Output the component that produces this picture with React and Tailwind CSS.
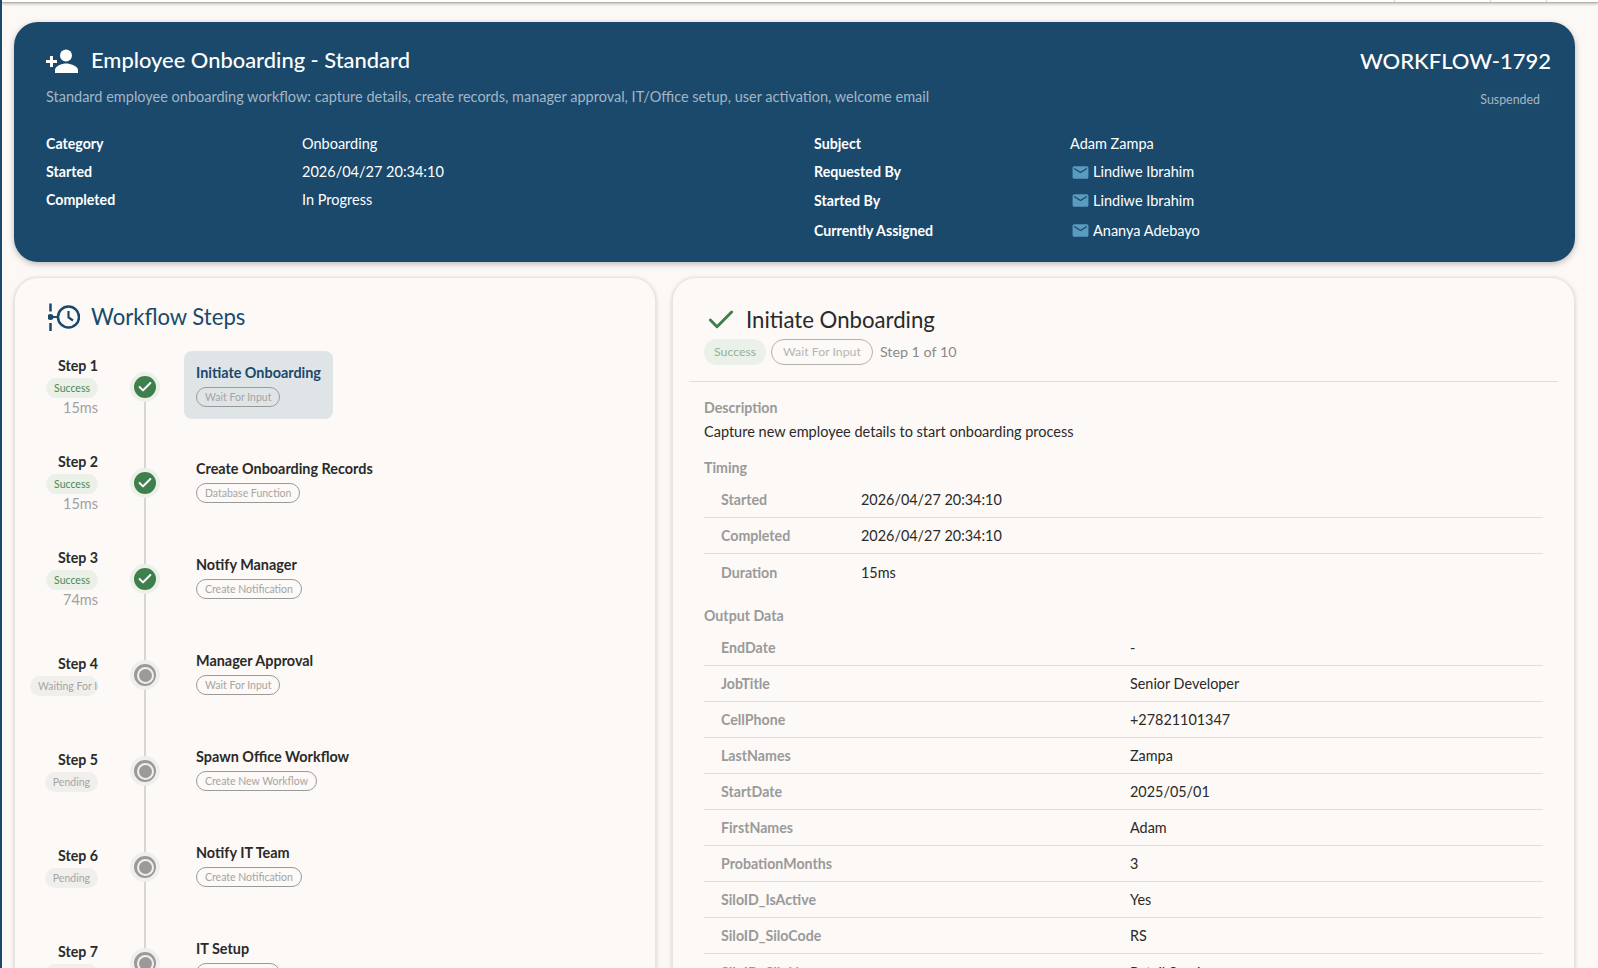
import { Check } from 'lucide-react';

const steps = [
  { n: 1, title: 'Initiate Onboarding', type: 'Wait For Input', status: 'Success', ms: '15ms', active: true },
  { n: 2, title: 'Create Onboarding Records', type: 'Database Function', status: 'Success', ms: '15ms' },
  { n: 3, title: 'Notify Manager', type: 'Create Notification', status: 'Success', ms: '74ms' },
  { n: 4, title: 'Manager Approval', type: 'Wait For Input', status: 'Waiting For Input' },
  { n: 5, title: 'Spawn Office Workflow', type: 'Create New Workflow', status: 'Pending' },
  { n: 6, title: 'Notify IT Team', type: 'Create Notification', status: 'Pending' },
  { n: 7, title: 'IT Setup', type: 'Wait For Input', status: 'Pending' },
];

const timing = [
  ['Started', '2026/04/27 20:34:10'],
  ['Completed', '2026/04/27 20:34:10'],
  ['Duration', '15ms'],
];

const output = [
  ['EndDate', '-'],
  ['JobTitle', 'Senior Developer'],
  ['CellPhone', '+27821101347'],
  ['LastNames', 'Zampa'],
  ['StartDate', '2025/05/01'],
  ['FirstNames', 'Adam'],
  ['ProbationMonths', '3'],
  ['SiloID_IsActive', 'Yes'],
  ['SiloID_SiloCode', 'RS'],
  ['SiloID_SiloName', 'Retail Services'],
];

const PersonAdd = () => (
  <svg viewBox="0 0 32 24" className="h-[24px] w-[32px] fill-white">
    <path d="M0 11h4V7h3v4h4v3H7v4H4v-4H0z" />
    <circle cx="20" cy="6.5" r="6" />
    <path d="M9 24v-3c0-4 7-6.5 11-6.5S32 17 32 21v3z" />
  </svg>
);

const StepsIcon = () => (
  <svg viewBox="0 0 32 28" className="h-[28px] w-[32px] fill-none stroke-[#1a496c]">
    <path d="M2.5 0.5v8M2.5 20v8" strokeWidth="2.5" />
    <circle cx="2.5" cy="14" r="3" fill="#1a496c" stroke="none" />
    <path d="M5 14h5" strokeWidth="2" />
    <circle cx="20.5" cy="14" r="10.5" strokeWidth="2.5" />
    <path d="M20.5 8v6.5l4.5 3" strokeWidth="2.2" />
  </svg>
);

const MailIcon = () => (
  <svg viewBox="0 0 24 24" className="ml-[1px] h-[19px] w-[19px] fill-[#5a9bc0]">
    <path d="M20 4H4c-1.1 0-2 .9-2 2v12c0 1.1.9 2 2 2h16c1.1 0 2-.9 2-2V6c0-1.1-.9-2-2-2zm0 4l-8 5-8-5V6l8 5 8-5v2z" />
  </svg>
);

const Row = ({ label, value, labelWidth }) => (
  <div className="flex h-[36px] items-center border-b border-[#e0dedb] pl-[17px] last:h-[37px] last:border-b-0">
    <div className={`${labelWidth} text-[14.2px] font-bold text-[#9a9a9a]`}>{label}</div>
    <div className="text-[14.4px] text-[#2a2a2a]">{value}</div>
  </div>
);

const Info = ({ label, children, height = 'h-[28px]' }) => (
  <div className={`flex items-center ${height}`}>
    <div className="w-[256px] text-[14.2px] font-bold">{label}</div>
    <div className="flex items-center gap-[3px] text-[14.5px]">{children}</div>
  </div>
);

const Person = ({ name }) => (
  <>
    <MailIcon />
    <span>{name}</span>
  </>
);

const Step = ({ step, last }) => {
  const done = step.status === 'Success';
  return (
    <div className="flex h-[96px] items-center">
      <div className="flex w-[68px] flex-col items-end">
        <div className="mb-[2px] text-[14.2px] leading-[20px] font-bold text-[#2a2a2a]">Step {step.n}</div>
        <div
          className={`h-[20px] max-w-[68px] overflow-hidden rounded-full px-2 text-[10.5px] leading-[20px] whitespace-nowrap ${
            done ? 'bg-[#ebf0e9] text-[#4a8a56]' : 'bg-[#f1efec] text-[#a5a5a5]'
          }`}
        >
          {step.status}
        </div>
        {step.ms && <div className="text-[14.5px] leading-[20px] text-[#a0a0a0]">{step.ms}</div>}
      </div>
      <div className="relative ml-[32px] flex h-full w-[30px] items-center justify-center">
        {!last && <div className="absolute top-1/2 left-[14px] h-full w-[2px] bg-[#d8d6d3]" />}
        <div className={`relative flex h-[30px] w-[30px] items-center justify-center rounded-full ${done ? 'bg-[#ebf0e9]' : 'bg-[#f1efec]'}`}>
          {done ? (
            <div className="flex h-[22px] w-[22px] items-center justify-center rounded-full bg-[#3f7f4c]">
              <Check size={16} strokeWidth={3} className="text-white" />
            </div>
          ) : (
            <div className="flex h-[22px] w-[22px] items-center justify-center rounded-full bg-[#9a9a9a]">
              <div className="h-[13px] w-[13px] rounded-full bg-[#9a9a9a] ring-2 ring-[#f1efec]" />
            </div>
          )}
        </div>
      </div>
      <div className={`mb-[4px] ml-[24px] flex flex-col items-start rounded-lg px-3 py-3 ${step.active ? 'bg-[#dfe4e6]' : ''}`}>
        <div className={`text-[14.4px] leading-[20px] font-bold whitespace-nowrap ${step.active ? 'text-[#1a496c]' : 'text-[#2a2a2a]'}`}>{step.title}</div>
        <div className="mt-[4px] h-[20px] rounded-full border border-[#9a9a9a] px-2 text-[10.5px] leading-[18px] text-[#a5a5a5]">{step.type}</div>
      </div>
    </div>
  );
};

export default function App() {
  return (
    <div className="h-screen overflow-hidden border-l-2 border-[#1a496c] bg-[#fbf8f5] font-['Lato',sans-serif]">
      <div className="flex h-[3px] justify-end border-b border-[#b5b2ae] bg-white shadow-[0_1px_3px_rgba(0,0,0,0.25)]">
        <div className="w-[96px] border-l border-[#d8d6d3]" />
        <div className="w-[56px] border-l border-[#d8d6d3]" />
        <div className="w-[52px] border-l border-[#d8d6d3]" />
      </div>
      <div className="w-[1573px] pt-[19px] pl-[12px]">
        <header className="h-[240px] rounded-[24px] bg-[#1a496c] pt-[22px] pr-[24px] pl-[32px] text-white shadow-[0_2px_6px_rgba(0,0,0,0.25)]">
          <div className="flex items-start justify-between">
            <div>
              <div className="flex h-[33px] items-center gap-[13px]">
                <PersonAdd />
                <h1 className="text-[21.9px] font-medium">Employee Onboarding - Standard</h1>
              </div>
              <p className="mt-[9px] text-[14.5px] text-[#a3b6c6]">
                Standard employee onboarding workflow: capture details, create records, manager approval, IT/Office setup, user activation, welcome email
              </p>
            </div>
            <div className="flex flex-col items-end">
              <div className="text-[22px] leading-[33px] font-medium">WORKFLOW-1792</div>
              <div className="mt-[10px] rounded-full bg-[#1c4a6b] px-[11px] text-[12.4px] leading-[25px] text-[#a3b6c6]">Suspended</div>
            </div>
          </div>
          <div className="mt-[18px] flex">
            <div className="w-[768px]">
              <Info label="Category">Onboarding</Info>
              <Info label="Started">2026/04/27 20:34:10</Info>
              <Info label="Completed">In Progress</Info>
            </div>
            <div>
              <Info label="Subject">Adam Zampa</Info>
              <Info label="Requested By"><Person name="Lindiwe Ibrahim" /></Info>
              <Info label="Started By" height="h-[29px]"><Person name="Lindiwe Ibrahim" /></Info>
              <Info label="Currently Assigned" height="h-[31px]"><Person name="Ananya Adebayo" /></Info>
            </div>
          </div>
        </header>

        <div className="mt-[15px] grid grid-cols-[642px_903px] gap-x-[16px]">
          <section className="h-[800px] overflow-hidden rounded-[24px] border border-[#e8e6e3] bg-[#fcf9f6] pt-[21px] pl-[15px] shadow-[0_1px_4px_rgba(0,0,0,0.18)]">
            <div className="flex h-[36px] items-center gap-[11px] pl-[18px]">
              <StepsIcon />
              <h2 className="text-[22.1px] font-normal text-[#1a496c]">Workflow Steps</h2>
            </div>
            <div className="mt-[4px]">
              {steps.map((s, i) => (
                <Step key={s.n} step={s} last={i === steps.length - 1} />
              ))}
            </div>
          </section>

          <section className="h-[800px] overflow-hidden rounded-[24px] border border-[#e8e6e3] bg-[#fcf9f6] px-[16px] pt-[24px] shadow-[0_1px_4px_rgba(0,0,0,0.18)]">
            <div className="border-b border-[#e0dedb] pb-[16px] pl-[15px]">
              <div className="mb-[1px] flex h-[36px] items-center gap-[9px] pl-[1px]">
                <Check size={32} strokeWidth={2.2} className="text-[#3f7f4c]" />
                <h2 className="text-[22.2px] font-normal text-[#2a2a2a]">Initiate Onboarding</h2>
              </div>
              <div className="flex items-center gap-[5px]">
                <span className="rounded-full bg-[#ebf0e9] px-[10px] text-[12.3px] leading-[26px] text-[#8fb497]">Success</span>
                <span className="rounded-full border border-[#b5b2ae] px-[11px] text-[12.3px] leading-[24px] text-[#b5b5b5]">Wait For Input</span>
                <span className="ml-[2px] text-[14.3px] text-[#8a8a8a]">Step 1 of 10</span>
              </div>
            </div>
            <div className="pr-[15px] pl-[15px]">
              <div className="mt-[16px] text-[14.2px] leading-[20px] font-bold text-[#9a9a9a]">Description</div>
              <div className="mt-[4px] text-[14.5px] leading-[20px] text-[#2a2a2a]">Capture new employee details to start onboarding process</div>
              <div className="mt-[16px] text-[14.2px] leading-[20px] font-bold text-[#9a9a9a]">Timing</div>
              <div className="mt-[4px]">
                {timing.map(([l, v]) => (
                  <Row key={l} label={l} value={v} labelWidth="w-[140px]" />
                ))}
              </div>
              <div className="mt-[15px] text-[14.2px] leading-[20px] font-bold text-[#9a9a9a]">Output Data</div>
              <div className="mt-[4px]">
                {output.map(([l, v]) => (
                  <Row key={l} label={l} value={v} labelWidth="w-[409px]" />
                ))}
              </div>
            </div>
          </section>
        </div>
      </div>
    </div>
  );
}
